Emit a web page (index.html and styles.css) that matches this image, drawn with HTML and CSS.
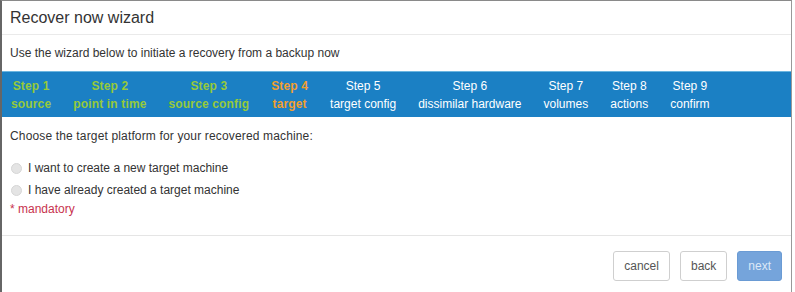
FILE: index.html
```html
<!DOCTYPE html>
<html lang="en">
<head>
    <meta charset="UTF-8">
    <title>Recover now wizard</title>
    <link rel="stylesheet" href="styles.css">
</head>
<body>
    <div class="modal">
        <div class="modal-header">Recover now wizard</div>
        <div class="intro">Use the wizard below to initiate a recovery from a backup now</div>

        <ul class="steps">
            <li class="done"><span>Step 1</span><span>source</span></li>
            <li class="done"><span>Step 2</span><span>point in time</span></li>
            <li class="done"><span>Step 3</span><span>source config</span></li>
            <li class="current"><span>Step 4</span><span>target</span></li>
            <li><span>Step 5</span><span>target config</span></li>
            <li><span>Step 6</span><span>dissimilar hardware</span></li>
            <li><span>Step 7</span><span>volumes</span></li>
            <li><span>Step 8</span><span>actions</span></li>
            <li><span>Step 9</span><span>confirm</span></li>
        </ul>

        <div class="modal-body">
            <p class="question">Choose the target platform for your recovered machine:</p>
            <label class="opt"><input type="radio" name="target"> I want to create a new target machine</label>
            <label class="opt"><input type="radio" name="target"> I have already created a target machine</label>
            <p class="mandatory">* mandatory</p>
        </div>

        <div class="modal-footer">
            <button class="btn">cancel</button>
            <button class="btn">back</button>
            <button class="btn btn-primary" disabled>next</button>
        </div>
    </div>
</body>
</html>
```

FILE: styles.css
```css
html, body {
  margin: 0;
  padding: 0;
  background: #fff;
}

body {
  font-family: "Liberation Sans", Arial, sans-serif;
  color: #333;
  width: 795px;
  height: 292px;
  overflow: hidden;
}

.modal {
  width: 792px;
  height: 292px;
  border-top: 1px solid #8a8a8a;
  border-left: 2px solid #666;
  border-right: 1px solid #999;
  box-sizing: border-box;
  background: #fff;
}

.modal-header {
  height: 33px;
  line-height: 33px;
  padding: 0 8px;
  font-size: 16px;
  color: #333;
  border-bottom: 1px solid #eaeaea;
}

.intro {
  height: 36px;
  line-height: 36px;
  padding: 0 8px;
  font-size: 12px;
  color: #333;
}

/* 步骤条 */
.steps {
  list-style: none;
  margin: 0;
  padding: 0 9px;
  height: 46px;
  background: #1b80c4;
  border-top: 1px solid #6cb6e0;
  box-sizing: border-box;
  display: flex;
  gap: 22px;
  align-items: center;
}
.steps li {
  display: flex;
  flex-direction: column;
  align-items: center;
  gap: 4px;
  font-size: 12px;
  color: #fff;
  line-height: 14px;
  padding-top: 1px;
}
.steps li.done {
  color: #96c93b;
  font-weight: bold;
  letter-spacing: 0.15px;
}
.steps li.current {
  color: #f29f2e;
  font-weight: bold;
  letter-spacing: 0.15px;
}

.modal-body {
  height: 118px;
  padding: 0 8px;
  border-bottom: 1px solid #e5e5e5;
  font-size: 12px;
}
.question {
  margin: 0;
  padding-top: 12px;
  line-height: 14px;
  letter-spacing: 0.15px;
}
.opt {
  display: flex;
  align-items: center;
  gap: 6px;
  line-height: 14px;
}
.opt:first-of-type {
  margin-top: 18px;
}
.opt + .opt {
  margin-top: 8px;
}
.opt input {
  margin: 0 0 0 1px;
  width: 11px;
  height: 11px;
  -webkit-appearance: none;
  appearance: none;
  border-radius: 50%;
  background: #e4e4e4;
  border: 1px solid #d6d6d6;
}
.mandatory {
  margin: 5px 0 0;
  color: #c8324e;
  line-height: 14px;
}

.modal-footer {
  display: flex;
  justify-content: flex-end;
  gap: 10px;
  padding: 15px 9px 0 0;
}
.btn {
  font-family: "Liberation Sans", Arial, sans-serif;
  font-size: 12px;
  height: 30px;
  padding: 0 10px;
  border: 1px solid #cfcfcf;
  border-radius: 3px;
  background: #fff;
  color: #555;
}
.btn-primary {
  background: #75a4db;
  border-color: #6a9bd4;
  color: #dce8f7;
}
```
